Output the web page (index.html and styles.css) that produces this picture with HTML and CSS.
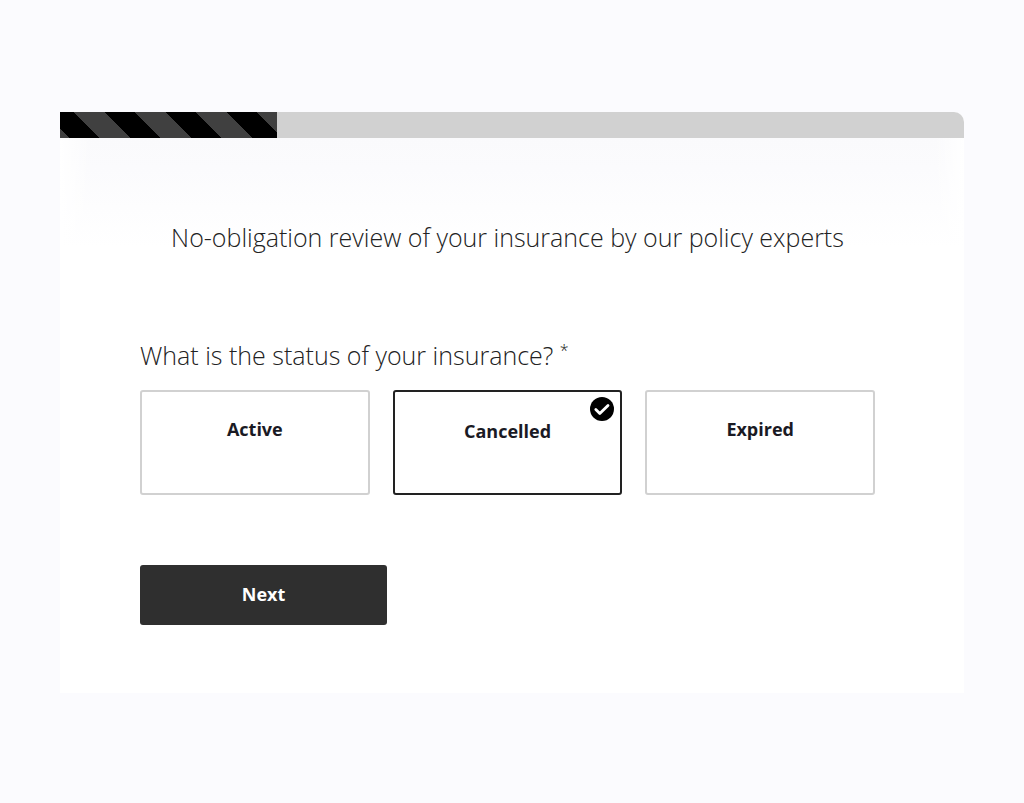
FILE: index.html
```
<!DOCTYPE html>
<html lang="en">
<head>
  <meta charset="UTF-8">
  <meta name="viewport" content="width=device-width, initial-scale=1">
  <title>Insurance review</title>
  <link rel="stylesheet" href="styles.css">
</head>
<body>
  <main class="survey">
    <div class="progress">
      <div class="progress-bar"></div>
    </div>

    <form class="survey-form">
      <h1>No-obligation review of your insurance by our policy experts</h1>

      <fieldset class="question">
        <legend>What is the status of your insurance? <span class="required">*</span></legend>

        <div class="options">
          <label class="option">
            <input type="radio" name="status" value="active">
            <span>Active</span>
          </label>

          <label class="option">
            <input type="radio" name="status" value="cancelled" checked>
            <span>Cancelled</span>
            <svg class="check" viewBox="0 0 24 24" aria-hidden="true">
              <circle cx="12" cy="12" r="12" fill="#000"/>
              <path d="M5.8 12.6l4 4 8.2-8.2" fill="none" stroke="#fff" stroke-width="2.8" stroke-linecap="round" stroke-linejoin="round"/>
            </svg>
          </label>

          <label class="option">
            <input type="radio" name="status" value="expired">
            <span>Expired</span>
          </label>
        </div>
      </fieldset>

      <button type="button" class="next">Next</button>
    </form>
  </main>
</body>
</html>
```

FILE: styles.css
```
* {
  box-sizing: border-box;
}

body {
  margin: 0;
  padding: 112px 60px;
  background-color: #fbfbfe;
  color: #222;
  font-family: "Open Sans", sans-serif;
}

.survey {
  background-color: white;
  border-top-right-radius: 10px;
}

.progress {
  height: 26px;
  background-color: #d1d1d1;
  border-top-right-radius: 10px;
  overflow: hidden;
}

.progress-bar {
  width: 24%;
  height: 100%;
  background-color: black;
  background-image: linear-gradient(45deg, #404040 25%, transparent 25%, transparent 50%, #404040 50%, #404040 75%, transparent 75%);
  background-size: 61px 61px;
  background-position: 14px 0;
}

/* soft shade under the progress bar, fading out at the sides */
.survey-form {
  padding: 80px 89px 68px 80px;
  background-image:
    linear-gradient(90deg, white, transparent 30px, transparent calc(100% - 30px), white),
    linear-gradient(#fafafc, #fbfbfd 30px, white 110px);
}

h1 {
  margin: 0 0 80px;
  font-size: 25px;
  line-height: 38px;
  font-weight: 300;
  text-align: center;
}

.question {
  margin: 0 0 70px;
  padding: 0;
  border: 0;
  min-width: 0;
}

legend {
  padding: 0;
  margin-bottom: 16px;
  font-size: 25px;
  line-height: 38px;
  font-weight: 300;
}

.required {
  font-size: 16px;
  line-height: 28px;
  vertical-align: top;
}

.options {
  display: grid;
  grid-template-columns: repeat(3, 1fr);
  gap: 23px;
}

.option {
  position: relative;
  height: 105px;
  padding-top: 24px;
  border: 2px solid #d1d1d1;
  border-radius: 3px;
  color: #1a1a24;
  font-size: 18px;
  line-height: 26px;
  font-weight: 700;
  text-align: center;
  cursor: pointer;
}

.option input {
  position: absolute;
  opacity: 0;
}

.option:has(input:checked) {
  padding-top: 26px;
  border-color: #222;
}

.check {
  position: absolute;
  top: 5px;
  right: 6px;
  width: 24px;
  height: 24px;
}

.next {
  display: block;
  width: 247px;
  height: 60px;
  padding: 0 0 2px;
  border: 0;
  border-radius: 3px;
  background-color: #2f2f2f;
  color: white;
  font: 700 18px "Open Sans", sans-serif;
  cursor: pointer;
}
```
